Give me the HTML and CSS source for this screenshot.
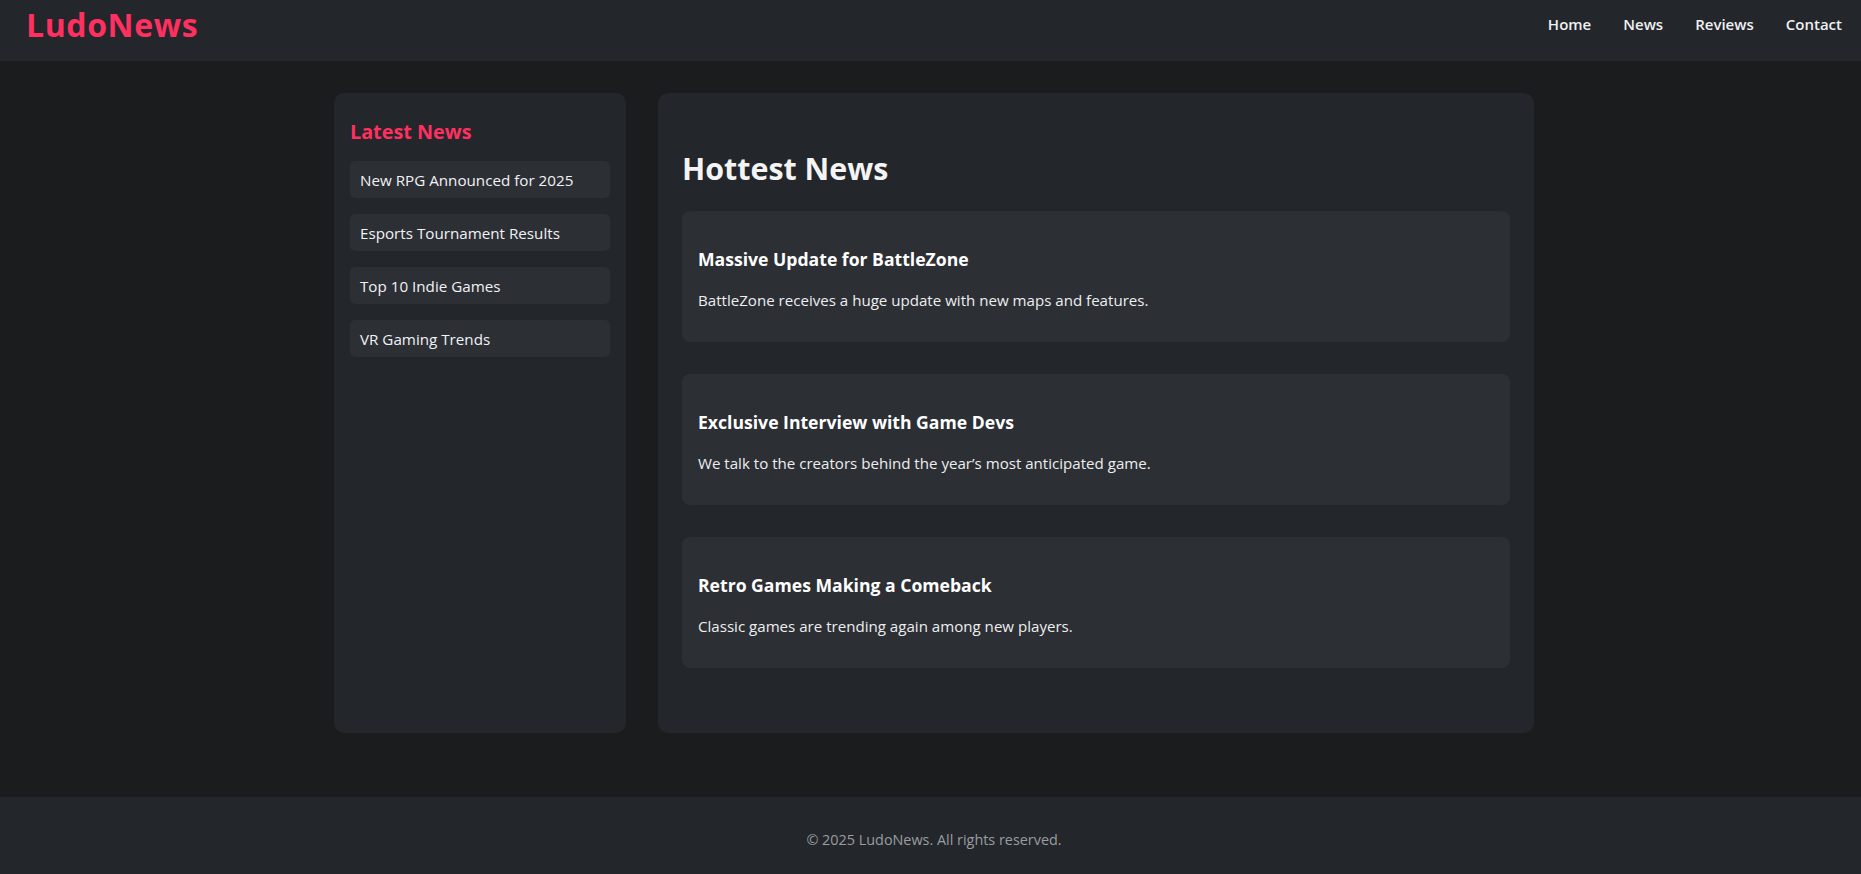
FILE: index.html
```html
<!DOCTYPE html>
<html lang="en">
<head>
<meta charset="utf-8">
<title>LudoNews</title>
<link rel="stylesheet" href="styles.css">
</head>
<body>
<header class="site-header">
  <div class="logo">LudoNews</div>
  <nav class="nav">
    <a href="#">Home</a>
    <a href="#">News</a>
    <a href="#">Reviews</a>
    <a href="#">Contact</a>
  </nav>
</header>

<main class="layout">
  <aside class="sidebar">
    <h3 class="sidebar-title">Latest News</h3>
    <ul class="latest-list">
      <li>New RPG Announced for 2025</li>
      <li>Esports Tournament Results</li>
      <li>Top 10 Indie Games</li>
      <li>VR Gaming Trends</li>
    </ul>
  </aside>

  <section class="content">
    <h2 class="content-title">Hottest News</h2>
    <article class="news-card">
      <h3 class="news-title">Massive Update for BattleZone</h3>
      <p class="news-text">BattleZone receives a huge update with new maps and features.</p>
    </article>
    <article class="news-card">
      <h3 class="news-title">Exclusive Interview with Game Devs</h3>
      <p class="news-text">We talk to the creators behind the year’s most anticipated game.</p>
    </article>
    <article class="news-card">
      <h3 class="news-title">Retro Games Making a Comeback</h3>
      <p class="news-text">Classic games are trending again among new players.</p>
    </article>
  </section>
</main>

<footer class="site-footer">
  <p>© 2025 LudoNews. All rights reserved.</p>
</footer>
</body>
</html>
```

FILE: styles.css
```css
html {
  overflow-x: hidden;
  background: #1b1c1e;
}

body {
  margin: 0;
  width: 1868px;
  background: #1b1c1e;
  color: #f2f2f2;
  font-family: "Open Sans", "Noto Sans", sans-serif;
}

/* Header */
.site-header {
  display: flex;
  justify-content: space-between;
  align-items: flex-start;
  height: 61px;
  padding: 0 26px 0 26px;
  background: #23262a;
  box-sizing: border-box;
}

.logo {
  padding-top: 5px;
  font-size: 32px;
  line-height: 40px;
  font-weight: 700;
  letter-spacing: 0.6px;
  color: #ff3060;
}

.nav {
  display: flex;
  gap: 32px;
  padding-top: 14px;
}

.nav a {
  font-size: 15px;
  line-height: 20px;
  font-weight: 600;
  color: #eef0f2;
  text-decoration: none;
}

/* Layout */
.layout {
  display: grid;
  grid-template-columns: 1fr 3fr;
  gap: 32px;
  width: 1200px;
  margin: 32px auto 64px;
}

/* Sidebar */
.sidebar {
  background: #23262a;
  border-radius: 10px;
  padding: 16px;
}

.sidebar-title {
  margin: 10px 0 16px;
  font-size: 19.8px;
  line-height: 26px;
  font-weight: 700;
  color: #ff3060;
}

.latest-list {
  list-style: none;
  margin: 0;
  padding: 0;
  display: flex;
  flex-direction: column;
  gap: 16px;
}

.latest-list li {
  background: #2c2f34;
  border-radius: 5px;
  padding: 8.5px 10px 7.5px;
  font-size: 15.2px;
  line-height: 21px;
  color: #f0f2f4;
}

/* Main content */
.content {
  background: #23262a;
  border-radius: 10px;
  padding: 24px 24px 33px;
}

.content-title {
  margin: 32px 0 22px;
  font-size: 30.4px;
  line-height: 40px;
  font-weight: 700;
  color: #f4f4f4;
}

.news-card {
  background: #2c2f34;
  border-radius: 8px;
  padding: 16px;
  margin-bottom: 32px;
}

.news-title {
  margin: 20.6px 0 19px;
  font-size: 17.6px;
  line-height: 23px;
  font-weight: 700;
  color: #ffffff;
}

.news-text {
  margin: 0 0 16.5px;
  font-size: 15.1px;
  line-height: 20px;
  color: #eceef0;
}

/* Footer */
.site-footer {
  background: #23262a;
  padding: 30.5px 0 27.5px;
  text-align: center;
}

.site-footer p {
  margin: 0;
  font-size: 14.4px;
  line-height: 24px;
  color: #9a9da1;
}
```
